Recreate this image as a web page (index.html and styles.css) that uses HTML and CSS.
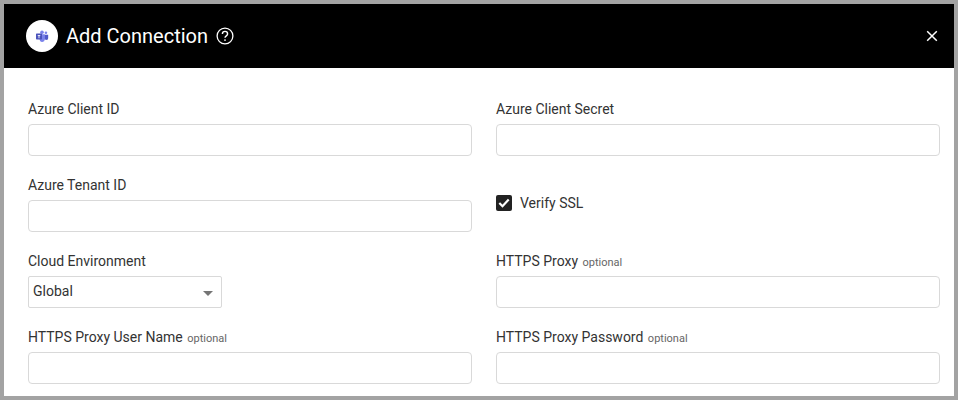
FILE: index.html
```html
<!DOCTYPE html>
<html lang="en">
<head>
<meta charset="utf-8">
<title>Add Connection</title>
<link rel="stylesheet" href="styles.css">
</head>
<body>
<div class="dialog">
  <header class="header">
    <span class="logo">
      <svg width="14" height="12" viewBox="0 0 16 14"><circle cx="12.6" cy="3.2" r="1.5" fill="#7b83eb"/><path d="M10.6 5.4h4.6v4.2a2 2 0 0 1-2.4 1.9l-2.2-.4z" fill="#5059c9"/><circle cx="8" cy="2.6" r="2.1" fill="#7b83eb"/><path d="M5 5h6.2v5.8a3 3 0 0 1-6 .4z" fill="#7b83eb"/><rect x="1" y="4" width="7" height="7" rx=".8" fill="#4b53bc"/><path d="M3 5.8h3v.8H5v3H4v-3H3z" fill="#fff"/></svg>
    </span>
    <h1 class="title">Add Connection</h1>
    <svg class="help" width="20" height="20" viewBox="0 0 20 20" fill="none" stroke="#fff"><circle cx="10" cy="10" r="7.9" stroke-width="1.3"/><path d="M7.4 8a2.6 2.6 0 0 1 5.2 0c0 1.8-2.6 1.9-2.6 3.8" stroke-width="1.4"/><circle cx="10" cy="14.1" r=".9" fill="#fff" stroke="none"/></svg>
    <svg class="close" width="12" height="12" viewBox="0 0 12 12" stroke="#fff" stroke-width="1.5"><path d="M1.2 1.2l9.6 9.6M10.8 1.2l-9.6 9.6"/></svg>
  </header>
  <form class="form">
    <div class="field"><label class="label">Azure Client ID</label><input class="input" type="text"></div>
    <div class="field"><label class="label">Azure Client Secret</label><input class="input" type="text"></div>
    <div class="field"><label class="label">Azure Tenant ID</label><input class="input" type="text"></div>
    <div class="check-field">
      <span class="checkbox"><svg width="12" height="10" viewBox="0 0 12 10" fill="none" stroke="#fff" stroke-width="2.2"><path d="M1.3 5l3.2 3.2 6.2-6.6"/></svg></span>
      <span class="check-label">Verify SSL</span>
    </div>
    <div class="field"><label class="label">Cloud Environment</label>
      <div class="select"><span>Global</span><span class="caret"></span></div>
    </div>
    <div class="field"><label class="label">HTTPS Proxy <small class="optional">optional</small></label><input class="input" type="text"></div>
    <div class="field"><label class="label">HTTPS Proxy User Name <small class="optional">optional</small></label><input class="input" type="text"></div>
    <div class="field"><label class="label">HTTPS Proxy Password <small class="optional">optional</small></label><input class="input" type="text"></div>
  </form>
</div>
</body>
</html>
```
FILE: styles.css
```css
* { box-sizing: border-box; }
html, body { margin: 0; height: 400px; overflow: hidden; }
body { font-family: Roboto, "Liberation Sans", sans-serif; background: #a3a3a3; }
.dialog { margin: 4px 4px 0; height: 392px; background: #fff; overflow: hidden; }
.header { height: 64px; background: #000; display: flex; align-items: center; padding: 0 16px 0 22px; color: #fff; }
.logo { width: 32px; height: 32px; border-radius: 50%; background: #fff; display: flex; align-items: center; justify-content: center; }
.title { margin: 0 0 0 8px; font-size: 20px; font-weight: 400; line-height: 28px; }
.help { margin-left: 7px; }
.close { margin-left: auto; }
.form { display: grid; grid-template-columns: 444px 444px; column-gap: 24px; padding: 29px 0 0 24px; grid-auto-rows: 76px; }
.field { display: flex; flex-direction: column; }
.label { font-size: 14px; line-height: 24px; color: #333; height: 27px; }
.optional { font-size: 11px; color: #666; margin-left: 1px; }
.input { height: 32px; border: 1px solid #d9d9d9; border-radius: 4px; background: #fff; padding: 0 4px; outline: none; }
.select { width: 194px; height: 32px; border: 1px solid #d9d9d9; border-radius: 2px; display: flex; align-items: center; justify-content: space-between; padding: 0 8px 2px 4px; font-size: 14px; color: #333; }
.caret { width: 0; height: 0; border-left: 5px solid transparent; border-right: 5px solid transparent; border-top: 5px solid #757575; margin-top: 5px; }
.check-field { display: flex; align-items: center; height: 76px; padding-bottom: 16px; gap: 8px; }
.checkbox { width: 16px; height: 16px; border-radius: 2px; background: #222; display: flex; align-items: center; justify-content: center; }
.check-label { font-size: 14px; color: #333; }
```
